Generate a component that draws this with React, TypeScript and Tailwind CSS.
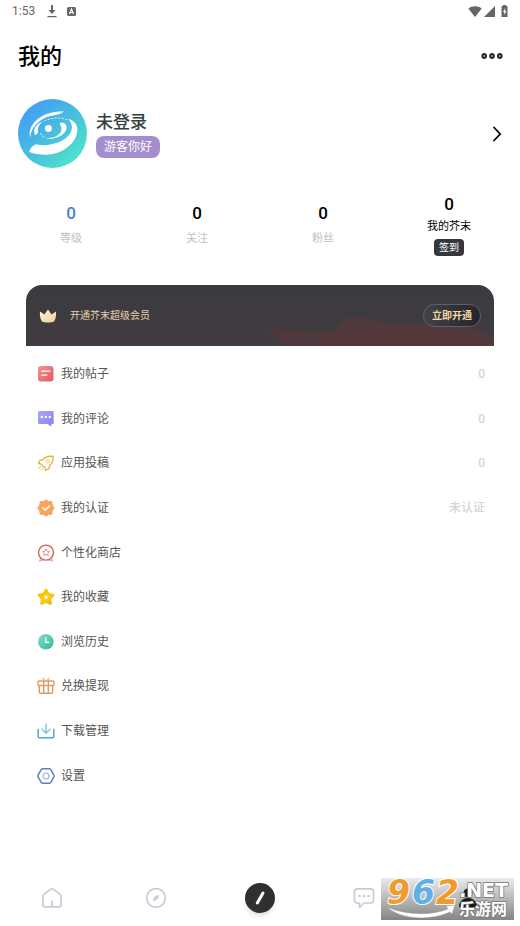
import type { ReactNode } from "react";

interface MenuEntry {
  label: string;
  icon: ReactNode;
  value?: string;
}

interface Stat {
  label: string;
  value: number;
  color: string;
}

const stats: Stat[] = [
  { label: "等级", value: 0, color: "text-[#4a7fd6]" },
  { label: "关注", value: 0, color: "text-black" },
  { label: "粉丝", value: 0, color: "text-black" },
];

const starPath =
  "M9 1.2l2.4 4.9 5.4.8-3.9 3.8.9 5.4L9 13.6l-4.8 2.5.9-5.4L1.2 6.9l5.4-.8z";

function PostIcon() {
  return (
    <svg viewBox="0 0 18 18" className="size-[18px]">
      <defs>
        <linearGradient id="post" x1="0" y1="0" x2="1" y2="1">
          <stop offset="0" stopColor="#f19291" />
          <stop offset="1" stopColor="#e05a60" />
        </linearGradient>
      </defs>
      <rect x="1" y="1" width="15.5" height="15.5" rx="3" fill="url(#post)" />
      <path
        d="M4.8 6.2h8M4.8 10.2h5"
        stroke="#fff"
        strokeWidth="1.3"
        strokeLinecap="round"
      />
    </svg>
  );
}

function CommentIcon() {
  return (
    <svg viewBox="0 0 18 18" className="size-[18px]">
      <defs>
        <linearGradient id="comment" x1="0" y1="0" x2="1" y2="1">
          <stop offset="0" stopColor="#aaa6f3" />
          <stop offset="1" stopColor="#8581ee" />
        </linearGradient>
      </defs>
      <path
        d="M2.5 1h13a1.200 1.200 0 0 1 1.200 1.200v10.600a1.200 1.200 0 0 1-1.200 1.200h-1v2.500L10.500 14h-8A1.500 1.500 0 0 1 1 12.500v-10A1.500 1.500 0 0 1 2.500 1z"
        fill="url(#comment)"
      />
      <circle cx="4.800" cy="7" r="1.200" fill="#fff" />
      <circle cx="8.800" cy="7" r="1.200" fill="#fff" />
      <circle cx="12.800" cy="7" r="1.200" fill="#fff" />
    </svg>
  );
}

function RocketIcon() {
  return (
    <svg
      viewBox="0 0 18 18"
      className="size-[18px]"
      fill="none"
      stroke="#dfb23c"
      strokeWidth="1.3"
      strokeLinecap="round"
      strokeLinejoin="round"
    >
      <path d="M16 2.500c-4.500-.8-7.500.3-9.800 3.200L3 6.300 1.500 9.500l3 .6c.5 1.500 1.400 2.600 3.200 3.200l1 3 3.300-1.700.6-3.100c2.800-2.300 3.900-5 3.400-9z" />
      <circle cx="10.800" cy="7.300" r="1.500" stroke="#f1d58c" />
      <path d="M3.500 12.800l-1.500 1.500M5.500 14.600l-1.300 1.300" stroke="#f1cf78" />
    </svg>
  );
}

function VerifiedIcon() {
  return (
    <svg viewBox="0 0 18 18" className="size-[18px]">
      <path
        d="M9 .8l2.500 1.700 3.300.2.400 3.300L17.200 9l-2 3-.4 3.200-3.300.2L9 17.200l-2.500-1.800-3.300-.2-.4-3.200L.8 9l2-3 .4-3.300 3.300-.2z"
        fill="#f9a55c"
        stroke="#f9a55c"
        strokeLinejoin="round"
      />
      <path
        d="M5.800 8.700l2.400 2.400 4.200-4"
        fill="none"
        stroke="#fff"
        strokeWidth="1.500"
        strokeLinecap="round"
        strokeLinejoin="round"
      />
    </svg>
  );
}

function MedalIcon() {
  return (
    <svg viewBox="0 0 18 18" className="size-[18px]" fill="none">
      <path
        d="M3.500 14.500l-.8 2.300 3.500-.6M14.500 14.500l.8 2.300-3.500-.6"
        stroke="#ecaaa4"
        strokeWidth="1.300"
      />
      <circle cx="9" cy="8.600" r="7.500" stroke="#d45f57" strokeWidth="1.400" />
      <path
        d={starPath}
        transform="translate(5.100 4.500) scale(.44)"
        stroke="#e88a83"
        strokeWidth="2.200"
        strokeLinejoin="round"
      />
    </svg>
  );
}

function FavoriteIcon() {
  return (
    <svg viewBox="0 0 18 18" className="size-[18px]">
      <defs>
        <linearGradient id="favorite" x1="0" y1="0" x2="1" y2="1">
          <stop offset="0.200" stopColor="#f3c400" />
          <stop offset="0.600" stopColor="#fccb13" />
          <stop offset="1" stopColor="#f0a71c" />
        </linearGradient>
      </defs>
      <path
        d="M9 2.200l2.200 3.900 4.800 1-3.200 3.500.6 4.900L9 13.500l-4.400 2 .6-4.900L2 7.100l4.800-1z"
        fill="url(#favorite)"
        stroke="url(#favorite)"
        strokeWidth="2.800"
        strokeLinejoin="round"
      />
      <path d={starPath} transform="translate(6.100 6.200) scale(.32)" fill="#fff" />
    </svg>
  );
}

function HistoryIcon() {
  return (
    <svg viewBox="0 0 18 18" className="size-[18px]">
      <defs>
        <linearGradient id="history" x1="0" y1="0" x2="1" y2="1">
          <stop offset="0" stopColor="#8adccb" />
          <stop offset="1" stopColor="#2fb99a" />
        </linearGradient>
      </defs>
      <circle cx="8.800" cy="8.800" r="7.800" fill="url(#history)" />
      <path
        d="M8.800 4.800v4.500h3.200"
        fill="none"
        stroke="#fff"
        strokeWidth="1.300"
        strokeLinecap="round"
      />
    </svg>
  );
}

function GiftIcon() {
  return (
    <svg
      viewBox="0 0 18 18"
      className="size-[18px]"
      fill="none"
      stroke="#e39a62"
      strokeWidth="1.400"
      strokeLinecap="round"
      strokeLinejoin="round"
    >
      <rect x="1" y="4" width="16" height="4.500" rx="1" />
      <path d="M2.300 8.500v6.600a1.200 1.200 0 0 0 1.200 1.200h11a1.200 1.200 0 0 0 1.200-1.200V8.500M6.700 4v12M11.300 4v12" />
      <path d="M6 1.500l1.500 1.700M12 1.500l-1.500 1.700" stroke="#efb68c" />
    </svg>
  );
}

function DownloadIcon() {
  return (
    <svg
      viewBox="0 0 18 18"
      className="size-[18px]"
      fill="none"
      strokeWidth="1.500"
      strokeLinecap="round"
      strokeLinejoin="round"
    >
      <path d="M1.200 7.500v7.200a1 1 0 0 0 1 1h13.600a1 1 0 0 0 1-1V7.500" stroke="#4fa6cf" />
      <path d="M9 2v9M5 7.200l4 4 4-4" stroke="#86c6e3" />
    </svg>
  );
}

function SettingsIcon() {
  return (
    <svg viewBox="0 0 18 18" className="size-[18px]" fill="none">
      <path
        d="M5.300 1.800h7.400l1 .6L17 8.300v1.400l-3.300 5.900-1 .6H5.300l-1-.6L1 9.700V8.300l3.300-5.900z"
        stroke="#5d7fc4"
        strokeWidth="1.500"
        strokeLinejoin="round"
      />
      <circle cx="9" cy="9" r="2.900" stroke="#a3b9e6" strokeWidth="1.400" />
    </svg>
  );
}

const menu: MenuEntry[] = [
  { label: "我的帖子", icon: <PostIcon />, value: "0" },
  { label: "我的评论", icon: <CommentIcon />, value: "0" },
  { label: "应用投稿", icon: <RocketIcon />, value: "0" },
  { label: "我的认证", icon: <VerifiedIcon />, value: "未认证" },
  { label: "个性化商店", icon: <MedalIcon /> },
  { label: "我的收藏", icon: <FavoriteIcon /> },
  { label: "浏览历史", icon: <HistoryIcon /> },
  { label: "兑换提现", icon: <GiftIcon /> },
  { label: "下载管理", icon: <DownloadIcon /> },
  { label: "设置", icon: <SettingsIcon /> },
];

function StatusBar() {
  return (
    <div className="flex h-[22px] items-center px-3 text-[#666]">
      <span className="text-xs leading-4">1:53</span>
      <svg viewBox="0 0 10 13" className="ml-3 h-[13px] w-2.5" fill="currentColor">
        <path d="M4 0h2v5h2.500L5 9 1.500 5H4zM.5 11h9v1.300h-9z" />
      </svg>
      <svg viewBox="0 0 9 9" className="ml-2.5 size-[9px]">
        <rect width="9" height="9" rx="1.500" fill="currentColor" />
        <path d="M2.500 7l2-5 2 5M3.300 5.500h2.400" stroke="#fff" strokeWidth="1.100" fill="none" />
      </svg>
      <svg viewBox="0 0 14 11" className="ml-auto h-[11px] w-3.5" fill="currentColor">
        <path d="M7 11L.3 2.400C4-.6 10-.6 13.700 2.400z" />
      </svg>
      <svg viewBox="0 0 11 11" className="ml-0.5 size-[11px]" fill="currentColor">
        <path d="M11 0v11H0z" />
      </svg>
      <svg viewBox="0 0 7 12" className="ml-1.5 h-3 w-[7px]">
        <path d="M2 0h3v1h1.500v11h-6V1H2z" fill="currentColor" />
        <path d="M4.300 3L2 7h1.300v3L5.300 6H4z" fill="#fff" />
      </svg>
    </div>
  );
}

function Avatar() {
  return (
    <svg viewBox="0 0 68 68" className="size-[69px]" role="img" aria-label="头像">
      <defs>
        <linearGradient id="avatar" x1="0.100" y1="0.100" x2="0.850" y2="0.900">
          <stop offset="0" stopColor="#429cf8" />
          <stop offset="0.550" stopColor="#49c0dc" />
          <stop offset="1" stopColor="#4fe3cb" />
        </linearGradient>
      </defs>
      <circle cx="34" cy="34" r="34" fill="url(#avatar)" />
      <g fill="#fff">
        <path d="M45 12c-6 .2-11.500 1-16 2.500C19 18 9.500 27 12 38c.6-8.500 7-16.500 17-20.500 6-1.500 13-2 16-5.500z" />
        <path d="M49.500 19.500c5 1.500 8.800 5 9 9.500.3 9-5 15.500-12.500 20.500-8.500 5.500-22 7.500-35 2.700 1-3.700 3.200-6.500 6.700-7.700 5 1.500 10 1.300 15.300 0 6.500-1.300 11-3 15-6.500 5.500-5 7.500-12 1.500-18.500z" />
        <path d="M41 24c1.500-1.300 4.500-.9 6.300 1.500 1.800 3-.3 6.500-2.300 8.500-4.500 4.500-12 6.500-20 4 5.500.8 11 .2 14.500-2.500 2.500-2 3.500-4 3.300-6.500-.1-1.700-1-3-1.800-5z" />
        <circle cx="30" cy="29" r="3.400" />
        <path d="M25 22c-6 2-11 7-8.300 13.500 2-.5 3-2 3-3.500-.8-3.500 1.300-7 5.300-10z" />
      </g>
      <path
        d="M26 21.500c7-3 16-4 22.500-1M22 33.500c1 2 2 3 4 4"
        fill="none"
        stroke="#fff"
        strokeWidth=".8"
        strokeDasharray="2 1.500"
      />
    </svg>
  );
}

function VipBanner() {
  return (
    <section className="relative flex h-[61px] items-center overflow-hidden rounded-t-2xl bg-linear-to-b from-[#3a3b3e] to-[#423b41] px-[13px]">
      <svg
        viewBox="0 0 230 30"
        className="absolute right-0 bottom-0 h-[30px] w-[230px]"
        fill="#6b3638"
      >
        <path d="M0 13l70 3 13-14 10-1 48 9 30-6 34 7 25 9v11H26L3 15z" fillOpacity=".35" />
        <path d="M57 29l8-13 100-6h10l55 15v4z" fillOpacity=".2" />
      </svg>
      <svg viewBox="0 0 18 14" className="relative h-3.5 w-[18px]">
        <defs>
          <linearGradient id="crown" x1="0" y1="0" x2="1" y2="1">
            <stop offset="0" stopColor="#fff4df" />
            <stop offset="1" stopColor="#f5ce98" />
          </linearGradient>
        </defs>
        <path
          d="M1 2.500l4.400 3L9 .5l3.600 5 4.400-3c.4 4-.2 7.500-2 10-3 1.400-9 1.400-12 0-1.800-2.500-2.400-6-2-10z"
          fill="url(#crown)"
        />
      </svg>
      <span className="relative ml-[13px] text-[10px] leading-4 text-[#e6d0ae]">
        开通芥末超级会员
      </span>
      <button
        type="button"
        className="relative ml-auto h-[23px] w-[58px] rounded-full border border-[#606164] bg-linear-to-r from-[#424347] to-[#242529] text-[10px] leading-4 font-bold text-[#f0d6a8]"
      >
        立即开通
      </button>
    </section>
  );
}

function BottomNav() {
  return (
    <nav className="grid h-14 grid-cols-5 items-center justify-items-center text-[#c9ccd6]">
      <button type="button" aria-label="首页">
        <svg
          viewBox="0 0 22 22"
          className="size-[22px]"
          fill="none"
          stroke="currentColor"
          strokeWidth="1.700"
          strokeLinecap="round"
          strokeLinejoin="round"
        >
          <path d="M2 9.200a2 2 0 0 1 .8-1.600l6.900-5.500a2 2 0 0 1 2.600 0l6.900 5.500a2 2 0 0 1 .8 1.600v8.600a2 2 0 0 1-2 2H4a2 2 0 0 1-2-2zM11 14v5" />
        </svg>
      </button>
      <button type="button" aria-label="发现">
        <svg viewBox="0 0 22 22" className="size-[22px]">
          <circle cx="11" cy="11" r="9.300" fill="none" stroke="currentColor" strokeWidth="1.700" />
          <path
            d="M13.500 8.500L12 12l-3.500 1.500L10 10z"
            fill="currentColor"
            stroke="currentColor"
            strokeWidth="1.200"
            strokeLinejoin="round"
          />
        </svg>
      </button>
      <button type="button" aria-label="发布" className="rounded-full bg-[#303030] shadow-md">
        <svg viewBox="0 0 30 30" className="size-[30px]">
          <path d="M18 10l-5.700 10" stroke="#fff" strokeWidth="3" strokeLinecap="round" />
        </svg>
      </button>
      <button type="button" aria-label="消息">
        <svg viewBox="0 0 22 22" className="size-[22px]">
          <path
            d="M4 1.800h14a2.500 2.500 0 0 1 2.500 2.500v9.200a2.500 2.500 0 0 1-2.500 2.500h-7.200L6.500 20.500V16H4a2.500 2.500 0 0 1-2.500-2.500V4.300A2.500 2.500 0 0 1 4 1.800z"
            fill="none"
            stroke="currentColor"
            strokeWidth="1.700"
            strokeLinejoin="round"
          />
          <g fill="currentColor">
            <circle cx="6.500" cy="9" r="1.300" />
            <circle cx="11" cy="9" r="1.300" />
            <circle cx="15.500" cy="9" r="1.300" />
          </g>
        </svg>
      </button>
      <button type="button" aria-label="我的">
        <svg viewBox="0 0 22 22" className="size-[22px]" fill="#222">
          <circle cx="11" cy="6" r="4.500" />
          <path d="M2 20c0-12 18-12 18 0z" />
        </svg>
      </button>
    </nav>
  );
}

function SiteMark() {
  return (
    <svg
      viewBox="0 -8 133 56"
      className="absolute right-1.5 bottom-0 h-14 w-[133px]"
      fontFamily="'DejaVu Sans', sans-serif"
      fontWeight="bold"
    >
      <defs>
        <linearGradient id="mark" x1="0" y1="0" x2="0" y2="1">
          <stop offset="0" stopColor="#000" stopOpacity="0.080" />
          <stop offset="0.500" stopColor="#000" stopOpacity="0.280" />
          <stop offset="1" stopColor="#000" stopOpacity="0.480" />
        </linearGradient>
      </defs>
      <rect width="133" height="42" fill="url(#mark)" />
      <path
        d="M6 29c18 8 44 9 61 2l-2-3 9-1-3 9-2-2C50 43 20 42 6 29z"
        fill="#fff"
        stroke="#999"
        strokeWidth=".5"
      />
      <g
        fontSize="33"
        fontStyle="italic"
        stroke="#fff"
        strokeWidth="2"
        paintOrder="stroke"
      >
        <text x="6" y="26" fill="#f39a2d">9</text>
        <text x="31" y="26" fill="#5eb0e6">6</text>
        <text x="55" y="26" fill="#f39a2d">2</text>
      </g>
      <g fill="#fff" stroke="#777" strokeWidth="1.500" paintOrder="stroke">
        <text x="78" y="19" fontSize="19">.NET</text>
        <text x="78" y="37" fontSize="16" fontFamily="'Noto Sans CJK SC', sans-serif">
          乐游网
        </text>
      </g>
    </svg>
  );
}

export default function App() {
  return (
    <div className="relative flex min-h-screen flex-col bg-white font-[Roboto,'Noto_Sans_CJK_SC',sans-serif]">
      <StatusBar />

      <header className="flex h-[68px] items-center justify-between pr-[17px] pl-[18px]">
        <h1 className="pt-0.5 text-[22px] leading-8 font-medium text-black">我的</h1>
        <button type="button" aria-label="更多">
          <svg
            viewBox="0 0 22 8"
            className="h-2 w-[22px]"
            fill="#999"
            stroke="#303030"
            strokeWidth="2"
          >
            <circle cx="3.200" cy="4" r="1.900" />
            <circle cx="11" cy="4" r="1.900" />
            <circle cx="18.800" cy="4" r="1.900" />
          </svg>
        </button>
      </header>

      <section className="mt-[9px] flex items-center px-[18px]">
        <Avatar />
        <div className="ml-[9px] flex flex-col items-start gap-0.5">
          <h2 className="text-[17px] leading-6 font-medium text-[#344040]">未登录</h2>
          <span className="rounded-lg bg-[#a58dcd] px-2 text-xs leading-[22px] text-white">
            游客你好
          </span>
        </div>
        <button type="button" aria-label="个人资料" className="ml-auto">
          <svg viewBox="0 0 10 16" className="h-4 w-2.5">
            <path
              d="M2 1.500L8.200 8 2 14.500"
              fill="none"
              stroke="#000"
              strokeWidth="1.800"
              strokeLinecap="round"
            />
          </svg>
        </button>
      </section>

      <section className="mt-6 grid grid-cols-4 px-2 text-center">
        {stats.map((stat) => (
          <div key={stat.label} className="pt-[9px]">
            <p className={`text-[17px] leading-6 font-medium ${stat.color}`}>{stat.value}</p>
            <p className="mt-1 text-[11px] leading-5 text-[#bfbfbf]">{stat.label}</p>
          </div>
        ))}
        <div className="flex flex-col items-center">
          <p className="text-[17px] leading-6 font-medium text-black">0</p>
          <p className="text-[11px] leading-[22px] text-black">我的芥末</p>
          <button
            type="button"
            className="mt-px rounded bg-[#35373d] px-[5px] text-[10px] leading-[17px] text-white"
          >
            签到
          </button>
        </div>
      </section>

      <main className="mt-[29px] px-[26px]">
        <VipBanner />
        <ul className="mt-1.5 flex h-[446px] flex-col">
          {menu.map((entry) => (
            <li key={entry.label} className="flex flex-1">
              <button type="button" className="flex w-full items-center pr-[9px] pl-[11px]">
                {entry.icon}
                <span className="ml-1.5 text-xs leading-5 text-[#555]">{entry.label}</span>
                {entry.value && (
                  <span className="ml-auto text-xs leading-5 font-medium text-[#d5d5d5]">
                    {entry.value}
                  </span>
                )}
              </button>
            </li>
          ))}
        </ul>
      </main>

      <footer className="mt-auto">
        <BottomNav />
      </footer>
      <SiteMark />
    </div>
  );
}
